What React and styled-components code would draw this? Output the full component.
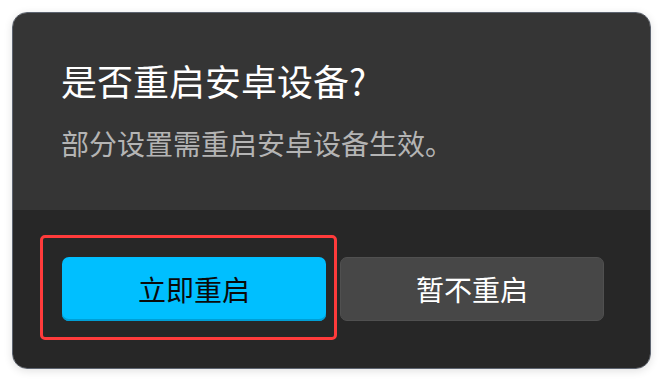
import React from "react";
import styled, { createGlobalStyle } from "styled-components";

const Global = createGlobalStyle`
  html, body { margin: 0; padding: 0; background: #ffffff; }
  body { font-family: "Noto Sans CJK SC", "Noto Sans", sans-serif; }
`;

const Page = styled.div`
  width: 664px;
  height: 382px;
  box-sizing: border-box;
  padding: 12px 13px 13px 12px;
`;

const Dialog = styled.div`
  width: 639px;
  height: 357px;
  box-sizing: border-box;
  border-radius: 15px;
  border: 1px solid #5d6470;
  overflow: hidden;
  display: flex;
  flex-direction: column;
  box-shadow: 0 2px 8px rgba(0, 0, 0, 0.12);
`;

const Body = styled.div`
  background: #353535;
  height: 197px;
  box-sizing: border-box;
  padding: 43px 48px 0 48px;
`;

const Title = styled.h1`
  margin: 0;
  font-size: 36px;
  font-weight: 400;
  line-height: 48px;
  color: #ffffff;
`;

const Message = styled.p`
  margin: 21px 0 0 0;
  font-size: 28px;
  line-height: 36px;
  color: #b4b4b4;
`;

const Footer = styled.div`
  flex: 1;
  background: #272727;
  display: flex;
  gap: 14px;
  padding: 47px 46px 46px 49px;
  box-sizing: border-box;
`;

const ButtonSlot = styled.div`
  position: relative;
  flex: 1;
  display: flex;
`;

const Button = styled.button`
  flex: 1;
  height: 64px;
  border-radius: 7px;
  font-family: "Noto Sans CJK SC", "Noto Sans", sans-serif;
  font-size: 28px;
  cursor: pointer;
  border: ${(p) => (p.$primary ? "none" : "1px solid #505050")};
  background: ${(p) => (p.$primary ? "#00bfff" : "#474747")};
  color: ${(p) => (p.$primary ? "#0a0a0a" : "#ffffff")};
  box-shadow: ${(p) => (p.$primary ? "inset 0 -2px 0 #009fd6" : "none")};
`;

const Highlight = styled.span`
  position: absolute;
  top: -22px;
  left: -22px;
  right: -11px;
  bottom: -18px;
  border: 3px solid #ff3b3b;
  border-radius: 5px;
  pointer-events: none;
`;

export default function App() {
  return (
    <>
      <Global />
      <Page>
        <Dialog>
          <Body>
            <Title>是否重启安卓设备?</Title>
            <Message>部分设置需重启安卓设备生效。</Message>
          </Body>
          <Footer>
            <ButtonSlot>
              <Button $primary>立即重启</Button>
              <Highlight />
            </ButtonSlot>
            <ButtonSlot>
              <Button>暂不重启</Button>
            </ButtonSlot>
          </Footer>
        </Dialog>
      </Page>
    </>
  );
}
